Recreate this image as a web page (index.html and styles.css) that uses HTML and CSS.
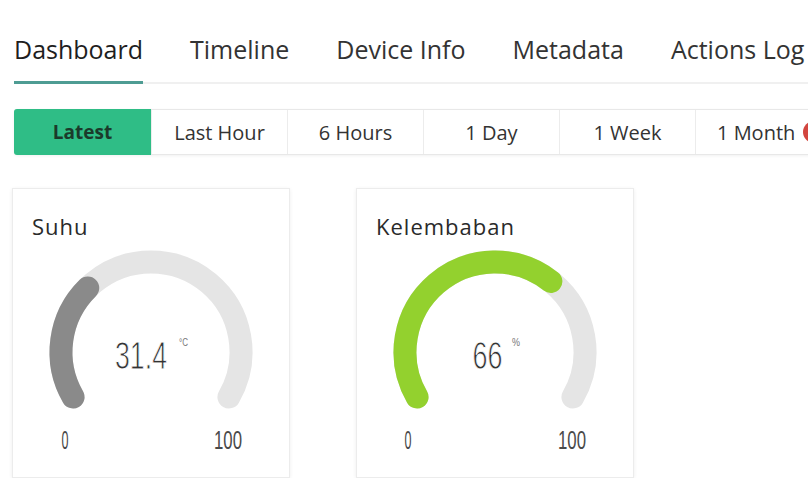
FILE: index.html
```html
<!DOCTYPE html>
<html lang="en">
<head>
<meta charset="utf-8">
<title>Dashboard</title>
<link rel="stylesheet" href="styles.css">
</head>
<body>
<nav class="tabs">
  <div class="tab active">Dashboard</div>
  <div class="tab">Timeline</div>
  <div class="tab">Device Info</div>
  <div class="tab">Metadata</div>
  <div class="tab">Actions Log</div>
</nav>

<div class="ranges">
  <div class="range selected">Latest</div>
  <div class="range">Last Hour</div>
  <div class="range">6 Hours</div>
  <div class="range">1 Day</div>
  <div class="range">1 Week</div>
  <div class="range last">1 Month <span class="dot"></span></div>
</div>

<main class="widgets">
  <section class="card">
    <h2 class="card-title">Suhu</h2>
    <svg class="gauge" viewBox="0 0 276 236" width="276" height="236">
      <path class="track" d="M 60.06 156 A 90 90 0 1 1 215.94 156"/>
      <path class="fill-gray" d="M 60.06 156 A 90 90 0 0 1 74.76 46.97"/>
      <text class="value" x="128" y="128" text-anchor="middle" textLength="52" lengthAdjust="spacingAndGlyphs">31.4</text>
      <text class="unit" x="166" y="105" textLength="9" lengthAdjust="spacingAndGlyphs">°C</text>
      <text class="label" x="52" y="208" text-anchor="middle" textLength="7" lengthAdjust="spacingAndGlyphs">0</text>
      <text class="label" x="215" y="208" text-anchor="middle" textLength="28" lengthAdjust="spacingAndGlyphs">100</text>
    </svg>
  </section>
  <section class="card">
    <h2 class="card-title">Kelembaban</h2>
    <svg class="gauge" viewBox="0 0 276 236" width="276" height="236">
      <path class="track" d="M 60.06 156 A 90 90 0 1 1 215.94 156"/>
      <path class="fill-green" d="M 60.06 156 A 90 90 0 0 1 193.90 40.47"/>
      <text class="value" x="130.5" y="128" text-anchor="middle" textLength="30" lengthAdjust="spacingAndGlyphs">66</text>
      <text class="unit" x="155" y="105" textLength="8" lengthAdjust="spacingAndGlyphs">%</text>
      <text class="label" x="51" y="208" text-anchor="middle" textLength="7" lengthAdjust="spacingAndGlyphs">0</text>
      <text class="label" x="215" y="208" text-anchor="middle" textLength="28" lengthAdjust="spacingAndGlyphs">100</text>
    </svg>
  </section>
</main>
</body>
</html>
```

FILE: styles.css
```css
* { box-sizing: border-box; }

html, body {
  margin: 0;
  padding: 0;
  background: #ffffff;
  overflow: hidden;
  font-family: "Open Sans", "Noto Sans", "Liberation Sans", sans-serif;
  color: #333;
}

.tabs {
  display: flex;
  gap: 47px;
  margin-left: 14px;
  padding-top: 32px;
  border-bottom: 2px solid #f0f0f0;
}

.tab {
  font-size: 25px;
  line-height: 34px;
  padding-bottom: 15px;
  border-bottom: 3px solid transparent;
  margin-bottom: -2px;
  color: #333;
  white-space: nowrap;
}

.tab.active {
  color: #1e1e1e;
  border-bottom-color: #4e9c93;
}

.ranges {
  display: flex;
  margin: 25px 0 0 14px;
  height: 46px;
  border: 1px solid #e8e8e8;
  border-right: none;
  border-radius: 4px 0 0 4px;
  box-shadow: 0 1px 3px rgba(0, 0, 0, 0.06);
  width: 900px;
}

.range {
  flex: 0 0 136px;
  display: flex;
  align-items: center;
  justify-content: center;
  font-size: 20px;
  color: #333;
  border-left: 1px solid #ececec;
  white-space: nowrap;
}

.range:first-child { border-left: none; }

.range.selected {
  background: #2fbd86;
  color: #1b3a2b;
  font-weight: 700;
  font-size: 19px;
  border-radius: 3px 0 0 3px;
  margin: -1px 0 -1px -1px;
  flex-basis: 137px;
}

.range.last {
  justify-content: flex-start;
  padding-left: 21px;
  gap: 8px;
  flex-basis: 200px;
}

.dot {
  width: 22px;
  height: 22px;
  border-radius: 50%;
  background: #d2463f;
  flex: 0 0 22px;
}

.widgets {
  display: flex;
  gap: 66px;
  margin: 33px 0 0 12px;
}

.card {
  width: 278px;
  height: 290px;
  border: 1px solid #ececec;
  box-shadow: 0 1px 4px rgba(0, 0, 0, 0.07);
  background: #fff;
  padding-top: 22px;
}

.card-title {
  margin: 0 0 0 19px;
  font-size: 22px;
  line-height: 30px;
  font-weight: 400;
  letter-spacing: 1px;
  color: #2a2a2a;
}

.gauge {
  display: block;
}

.track, .fill-gray, .fill-green {
  fill: none;
  stroke-width: 23;
  stroke-linecap: round;
}

.track { stroke: #e5e5e5; }
.fill-gray { stroke: #8a8a8a; }
.fill-green { stroke: #93d12e; }

.value {
  font-family: "Liberation Sans", "DejaVu Sans", sans-serif;
  font-size: 38px;
  fill: #333;
  stroke: #ffffff;
  stroke-width: 0.9px;
}

.unit {
  font-family: "Liberation Sans", sans-serif;
  font-size: 10px;
  fill: #777;
}

.label {
  font-family: "Liberation Sans", sans-serif;
  font-size: 25px;
  fill: #4a4a4a;
}
```
